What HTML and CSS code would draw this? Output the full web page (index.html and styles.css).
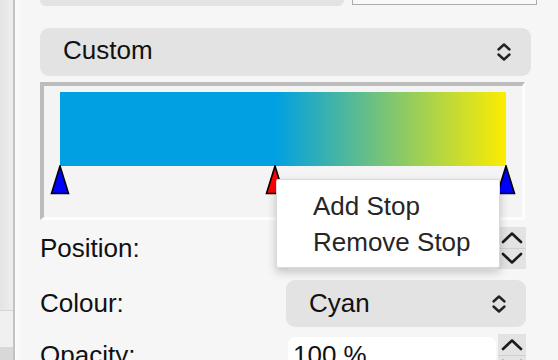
FILE: index.html
```html
<!DOCTYPE html>
<html lang="en">
<head>
  <meta charset="UTF-8" />
  <meta name="viewport" content="width=device-width, initial-scale=1.0" />
  <title>Gradient Inspector</title>
  <link rel="stylesheet" href="styles.css">
</head>
<body>
  <div class="window">
    <div class="edge">
      <div class="edge-top"></div>
      <div class="edge-mid"></div>
      <div class="edge-bottom"></div>
    </div>

    <div class="inspector">
      <div class="top-row">
        <div class="stub-button"></div>
        <div class="stub-field"></div>
      </div>

      <div class="select select-wide">
        <span>Custom</span>
        <svg class="updown" width="16" height="20" viewBox="0 0 16 20"><path d="M2.5 7.5L8 2.5l5.5 5M2.5 12.5L8 17.5l5.5-5" /></svg>
      </div>

      <div class="gradient-frame">
        <div class="gradient-bar"></div>
        <div class="stops">
          <svg class="stop" style="left: calc(0% - 10px)" width="20" height="30" viewBox="0 0 20 30"><polygon points="10,1 1.5,28.5 18.5,28.5" fill="#0000ff" /></svg>
          <svg class="stop" style="left: calc(48.2% - 10px)" width="20" height="30" viewBox="0 0 20 30"><polygon points="10,1 1.5,28.5 18.5,28.5" fill="#ff0000" /></svg>
          <svg class="stop" style="left: calc(100% - 10px)" width="20" height="30" viewBox="0 0 20 30"><polygon points="10,1 1.5,28.5 18.5,28.5" fill="#0000ff" /></svg>
        </div>
      </div>

      <div class="form-row row-position">
        <span class="label">Position:</span>
        <div class="field"></div>
        <div class="spin">
          <div class="spin-half"><svg width="22" height="13" viewBox="0 0 22 13"><path d="M2 11L11 2.5 20 11" /></svg></div>
          <div class="spin-half down"><svg width="22" height="13" viewBox="0 0 22 13"><path d="M2 2L11 10.5 20 2" /></svg></div>
        </div>
      </div>

      <div class="form-row row-colour">
        <span class="label">Colour:</span>
        <div class="select select-small">
          <span>Cyan</span>
          <svg class="updown" width="16" height="20" viewBox="0 0 16 20"><path d="M2.5 7.5L8 2.5l5.5 5M2.5 12.5L8 17.5l5.5-5" /></svg>
        </div>
      </div>

      <div class="form-row row-opacity">
        <span class="label">Opacity:</span>
        <div class="field">100 %</div>
        <div class="spin">
          <div class="spin-half"><svg width="22" height="13" viewBox="0 0 22 13"><path d="M2 11L11 2.5 20 11" /></svg></div>
          <div class="spin-half down"><svg width="22" height="13" viewBox="0 0 22 13"><path d="M2 2L11 10.5 20 2" /></svg></div>
        </div>
      </div>
    </div>

    <div class="context-menu">
      <div class="menu-item">Add Stop</div>
      <div class="menu-item">Remove Stop</div>
    </div>
  </div>
</body>
</html>
```

FILE: styles.css
```css
body {
  margin: 0;
  background: #f6f6f6;
  font-family: "Liberation Sans", Arial, sans-serif;
  font-size: 26px;
  color: #111;
  overflow: hidden;
}
.window {
  position: relative;
  display: flex;
  height: 360px;
}
.edge {
  width: 13px;
  border-right: 2px solid #c2c2c2;
  display: flex;
  flex-direction: column;
}
.edge-top {
  flex: 0 0 310px;
  background: linear-gradient(to right, #e4e4e4, #eeeeee);
}
.edge-mid {
  flex: 0 0 36px;
  background: #f0f0f0;
  border-top: 1px solid #d6d6d6;
}
.edge-bottom {
  flex: 1;
  background: #d8d8d8;
}
.inspector {
  flex: 1;
  padding-left: 25px;
  background: linear-gradient(to right, #fcfcfc, #f6f6f6 7px);
}
.top-row {
  display: flex;
  gap: 8px;
  height: 6px;
}
.stub-button {
  width: 304px;
  height: 6px;
  background: #e3e3e3;
  border-radius: 0 0 8px 8px;
}
.stub-field {
  flex: none;
  width: 185px;
  height: 5px;
  box-sizing: border-box;
  border: 1.5px solid #acacac;
  border-top: none;
  background: #f8f8f8;
}
.select {
  display: flex;
  align-items: center;
  justify-content: space-between;
  box-sizing: border-box;
  padding: 0 19px 0 23px;
  background: #e3e3e3;
  border-radius: 9px;
  color: #111;
}
.select-wide {
  margin-top: 22px;
  width: 491px;
  height: 48px;
}
.select-wide span {
  margin-bottom: 3px;
}
.select-small {
  width: 240px;
  height: 47px;
}
.select-small span {
  margin-bottom: 1px;
}
.updown path {
  fill: none;
  stroke: #222;
  stroke-width: 2.4;
  stroke-linecap: round;
  stroke-linejoin: round;
}
.gradient-frame {
  margin-top: 6px;
  width: 485px;
  height: 138px;
  box-sizing: border-box;
  border-top: 4px solid #bcbcbc;
  border-left: 4px solid #bcbcbc;
  border-right: 3px solid #fdfdfd;
  border-bottom: 3px solid #fdfdfd;
  padding: 6px 16px 0 16px;
  background: #f4f4f4;
}
.gradient-bar {
  height: 74px;
  background: linear-gradient(to right, #00a0e2 48.2%, #fdec00 100%);
}
.stops {
  position: relative;
  height: 28px;
}
.stop {
  position: absolute;
  top: -1px;
}
.stop polygon {
  stroke: #000;
  stroke-width: 1.6;
  stroke-linejoin: miter;
}
.form-row {
  display: flex;
  align-items: center;
}
.label {
  flex: 0 0 246px;
}
.row-position {
  margin-top: 7px;
  height: 42px;
}
.row-colour {
  margin-top: 11px;
}
.row-opacity {
  margin-top: 7px;
  height: 42px;
}
.field {
  align-self: flex-start;
  margin: 3px 0 0 2px;
  width: 208px;
  height: 40px;
  box-sizing: border-box;
  padding: 3px 0 0 5px;
  line-height: 30px;
  background: #fff;
  border-radius: 7px 7px 0 0;
  color: #111;
}
.spin {
  margin-left: 2px;
  width: 28px;
  height: 42px;
  display: flex;
  flex-direction: column;
  background: #e3e3e3;
}
.spin-half {
  flex: 1;
  display: flex;
  align-items: center;
  justify-content: center;
}
.spin-half.down {
  border-top: 1px solid #d0d0d0;
}
.spin path {
  fill: none;
  stroke: #1c1c1c;
  stroke-width: 2.6;
  stroke-linecap: round;
  stroke-linejoin: round;
}
.context-menu {
  position: absolute;
  left: 276px;
  top: 179px;
  width: 224px;
  height: 89px;
  box-sizing: border-box;
  padding: 8px 0 0 36px;
  background: #fff;
  border: 1px solid rgba(0, 0, 0, 0.15);
  border-radius: 2px;
  box-shadow: 0 4px 10px rgba(0, 0, 0, 0.22);
  color: #262626;
  z-index: 2;
}
.menu-item {
  line-height: 36px;
}
```
